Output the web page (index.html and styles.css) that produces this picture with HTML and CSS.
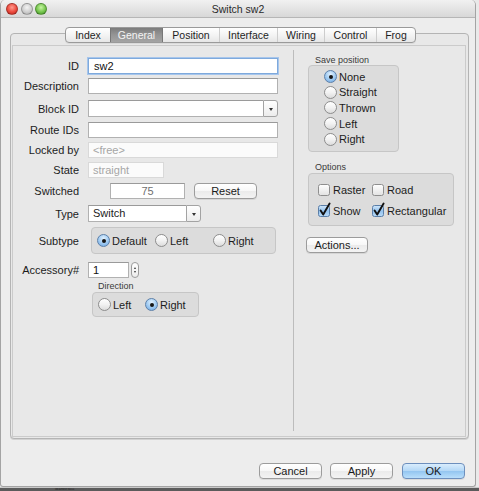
FILE: index.html
```html
<!DOCTYPE html>
<html>
<head>
<meta charset="utf-8">
<title>Switch sw2</title>
<link rel="stylesheet" href="styles.css">
</head>
<body>
<div class="window">
  <div class="titlebar">
    <div class="lights">
      <span class="light red"></span>
      <span class="light grey"></span>
      <span class="light green"></span>
    </div>
    <div class="title">Switch sw2</div>
    <div class="lights-spacer"></div>
  </div>

  <div class="tabpane">
    <div class="tabs">
      <div class="tab">Index</div>
      <div class="tab selected">General</div>
      <div class="tab">Position</div>
      <div class="tab">Interface</div>
      <div class="tab">Wiring</div>
      <div class="tab">Control</div>
      <div class="tab">Frog</div>
    </div>

    <div class="panel">
      <div class="col-left">
        <div class="row">
          <span class="lbl">ID</span>
          <div class="field focus w-full">sw2</div>
        </div>
        <div class="row mt4">
          <span class="lbl">Description</span>
          <div class="field w-full"></div>
        </div>
        <div class="row mt6">
          <span class="lbl">Block ID</span>
          <div class="combo w-full">
            <div class="combo-text"></div>
            <div class="combo-btn"><span class="tri"></span></div>
          </div>
        </div>
        <div class="row mt6">
          <span class="lbl">Route IDs</span>
          <div class="field w-full"></div>
        </div>
        <div class="row mt4">
          <span class="lbl">Locked by</span>
          <div class="field disabled w-full">&lt;free&gt;</div>
        </div>
        <div class="row mt4">
          <span class="lbl">State</span>
          <div class="field disabled w-state">straight</div>
        </div>
        <div class="row mt5">
          <span class="lbl">Switched</span>
          <div class="switched">
            <div class="field center muted w-switched">75</div>
            <div class="btn w-reset">Reset</div>
          </div>
        </div>
        <div class="row mt6">
          <span class="lbl">Type</span>
          <div class="combo w-type">
            <div class="combo-text">Switch</div>
            <div class="combo-btn"><span class="tri"></span></div>
          </div>
        </div>
        <div class="row row-group mt6">
          <span class="lbl">Subtype</span>
          <div class="group subtype">
            <div class="opt"><span class="radio on"></span>Default</div>
            <div class="opt"><span class="radio"></span>Left</div>
            <div class="opt"><span class="radio"></span>Right</div>
          </div>
        </div>
        <div class="row mt8">
          <span class="lbl">Accessory#</span>
          <div class="spin">
            <div class="field w-acc">1</div>
            <div class="stepper"><span class="up"></span><span class="down"></span></div>
          </div>
        </div>
        <div class="row-sub">
          <div class="sub-title">Direction</div>
          <div class="group direction">
            <div class="opt"><span class="radio"></span>Left</div>
            <div class="opt"><span class="radio on"></span>Right</div>
          </div>
        </div>
      </div>

      <div class="divider"></div>

      <div class="col-right">
        <div class="sub-title right-title">Save position</div>
        <div class="group savepos">
          <div class="opt vopt"><span class="radio on"></span>None</div>
          <div class="opt vopt"><span class="radio"></span>Straight</div>
          <div class="opt vopt"><span class="radio"></span>Thrown</div>
          <div class="opt vopt"><span class="radio"></span>Left</div>
          <div class="opt vopt"><span class="radio"></span>Right</div>
        </div>

        <div class="sub-title right-title options-title">Options</div>
        <div class="group options">
          <div class="opt copt">
            <svg class="check" width="13" height="14" viewBox="0 0 13 14"><rect x="0.5" y="2.5" width="11" height="11" rx="2" fill="url(#cbw)" stroke="#8e8e8e"/></svg>Raster
          </div>
          <div class="opt copt">
            <svg class="check" width="13" height="14" viewBox="0 0 13 14"><rect x="0.5" y="2.5" width="11" height="11" rx="2" fill="url(#cbw)" stroke="#8e8e8e"/></svg>Road
          </div>
          <div class="opt copt">
            <svg class="check" width="13" height="14" viewBox="0 0 13 14"><rect x="0.5" y="2.5" width="11" height="11" rx="2" fill="url(#cbb)" stroke="#5a7ea8"/><path d="M2.6 7.6 L5.2 11.6 L11.6 0.6" fill="none" stroke="#111" stroke-width="1.9" stroke-linecap="round" stroke-linejoin="round"/></svg>Show
          </div>
          <div class="opt copt">
            <svg class="check" width="13" height="14" viewBox="0 0 13 14"><rect x="0.5" y="2.5" width="11" height="11" rx="2" fill="url(#cbb)" stroke="#5a7ea8"/><path d="M2.6 7.6 L5.2 11.6 L11.6 0.6" fill="none" stroke="#111" stroke-width="1.9" stroke-linecap="round" stroke-linejoin="round"/></svg>Rectangular
          </div>
        </div>

        <div class="btn w-actions">Actions...</div>
      </div>
    </div>
  </div>

  <div class="buttons">
    <div class="btn w-dlg">Cancel</div>
    <div class="btn w-dlg">Apply</div>
    <div class="btn default w-dlg">OK</div>
  </div>
</div>
<div class="desk">localhost:8051</div>

<svg class="defs" width="0" height="0">
  <defs>
    <linearGradient id="cbw" x1="0" y1="0" x2="0" y2="1">
      <stop offset="0" stop-color="#ffffff"/>
      <stop offset="1" stop-color="#e2e2e2"/>
    </linearGradient>
    <linearGradient id="cbb" x1="0" y1="0" x2="0" y2="1">
      <stop offset="0" stop-color="#d2e7fa"/>
      <stop offset="0.5" stop-color="#93c2ee"/>
      <stop offset="1" stop-color="#b9dbf8"/>
    </linearGradient>
  </defs>
</svg>
</body>
</html>
```

FILE: styles.css
```css
* { box-sizing: border-box; }

html, body {
  margin: 0;
  padding: 0;
}

body {
  width: 479px;
  height: 491px;
  overflow: hidden;
  background: #e9e9e9;
  font-family: "Liberation Sans", Arial, sans-serif;
  font-size: 11px;
  color: #1c1c1c;
}

.window {
  width: 476px;
  height: 487px;
  background: #ededed;
  border: 1px solid #a4a4a4;
  border-top: none;
  border-radius: 5px 5px 3px 3px;
  display: flex;
  flex-direction: column;
}

/* title bar */
.titlebar {
  height: 18px;
  flex: none;
  display: flex;
  align-items: center;
  background: linear-gradient(#f1f1f1, #d8d8d8);
  border-bottom: 1px solid #b6b6b6;
  border-radius: 5px 5px 0 0;
}

.lights {
  width: 46px;
  padding-left: 5px;
  display: flex;
  gap: 2.5px;
  margin-top: 1px;
}

.lights-spacer { width: 46px; }

.light {
  width: 12px;
  height: 12px;
  border-radius: 50%;
  border: 1px solid rgba(0, 0, 0, 0.25);
}

.light.red { background: radial-gradient(circle at 50% 35%, #ff9c8f 0, #ec4a3e 55%, #b8261e 100%); }
.light.grey { background: radial-gradient(circle at 50% 35%, #f4f4f4 0, #cfcfcf 55%, #a9a9a9 100%); }
.light.green { background: radial-gradient(circle at 50% 35%, #c8f5a4 0, #76c64e 55%, #3f8f25 100%); }

.title {
  flex: 1;
  text-align: center;
  font-size: 10.5px;
  color: #2a2a2a;
  margin-top: 1px;
}

/* tabbed pane */
.tabpane {
  position: relative;
  margin: 15px 0 0 9px;
  width: 459px;
  height: 406px;
  flex: none;
  border: 1px solid #b4b4b4;
  border-radius: 4px;
  background: #e8e8e8;
  padding: 11px 2px 1px 1px;
  box-shadow: 0 1px 0 #d2d2d2;
}

.tabs {
  position: absolute;
  top: -7px;
  left: 54px;
  display: grid;
  grid-template-columns: 44px 53px 56px 58px 47px 52px 39px;
  height: 16px;
  border: 1px solid #9a9a9a;
  border-radius: 4px;
  background: linear-gradient(#ffffff, #f4f4f4 50%, #e6e6e6);
  overflow: hidden;
  box-shadow: 0 1px 0 rgba(0, 0, 0, 0.06);
}

.tab {
  display: flex;
  align-items: center;
  justify-content: center;
  font-size: 10.5px;
  color: #1e1e1e;
  border-left: 1px solid #cdcdcd;
  line-height: 1;
}

.tab:first-child { border-left: none; }

.tab.selected {
  background: linear-gradient(#7c7c7c, #959595 50%, #a4a4a4);
  color: #f4f4f4;
  border-left: 1px solid #777;
  border-right: 1px solid #777;
}

.tab.selected + .tab { border-left: none; }

.panel {
  height: 100%;
  border: 1px solid #cbcbcb;
  background: #e8e8e8;
  display: flex;
}

/* left column */
.col-left {
  width: 280px;
  flex: none;
  padding-top: 12px;
  display: flex;
  flex-direction: column;
}

.row {
  display: grid;
  grid-template-columns: 66px auto;
  column-gap: 9px;
  align-items: center;
  height: 16px;
}

.row-group { height: 27px; }

.mt4 { margin-top: 4px; }
.mt5 { margin-top: 5px; }
.mt6 { margin-top: 6px; }
.mt8 { margin-top: 8px; }

.lbl {
  text-align: right;
  white-space: nowrap;
  color: #1c1c1c;
}

.field {
  height: 16px;
  background: #ffffff;
  border: 1px solid #b1b1b1;
  border-top-color: #9a9a9a;
  padding: 0 4px;
  line-height: 14px;
  color: #111;
  white-space: nowrap;
  overflow: hidden;
}

.field.focus {
  border-color: #7ea9dc;
  box-shadow: 0 0 0 1px #a7c6ec;
  padding-left: 5px;
}

.field.disabled {
  border-color: #d9d9d9;
  background: #fbfbfb;
  color: #a6a6a6;
}

.field.center { text-align: center; }
.field.muted { color: #6f6f6f; }

.w-full { width: 190px; }
.w-state { width: 76px; }
.w-switched { width: 75px; }
.w-type { width: 113px; }
.w-acc { width: 41px; }

.switched {
  display: flex;
  align-items: center;
  gap: 9px;
  padding-left: 22px;
}

.combo {
  height: 17px;
  display: flex;
  align-items: stretch;
}

.combo-text {
  flex: 1;
  background: #fff;
  border: 1px solid #b1b1b1;
  border-top-color: #9a9a9a;
  border-right: none;
  padding: 0 4px;
  line-height: 15px;
}

.combo-btn {
  width: 15px;
  border: 1px solid #a3a3a3;
  border-radius: 0 3px 3px 0;
  background: linear-gradient(#ffffff, #ececec);
  display: flex;
  align-items: center;
  justify-content: center;
}

.tri {
  width: 0;
  height: 0;
  border-left: 2.5px solid transparent;
  border-right: 2.5px solid transparent;
  border-top: 3px solid #333;
  margin-top: 1px;
}

/* buttons */
.btn {
  height: 16px;
  border: 1px solid #9c9c9c;
  border-radius: 4px;
  background: linear-gradient(#ffffff, #f7f7f7 50%, #ebebeb 51%, #f3f3f3);
  display: flex;
  align-items: center;
  justify-content: center;
  color: #1a1a1a;
  box-shadow: 0 1px 0 rgba(0, 0, 0, 0.08);
}

.btn.default {
  border-color: #6d8fbd;
  background: linear-gradient(#d9edfd, #b3d7f6 50%, #93c5f0 51%, #b9defb);
}

.w-reset { width: 63px; }
.w-actions { width: 62px; margin: 11px 0 0 12px; }
.w-dlg { width: 63px; }

/* groups */
.group {
  background: #dcdcdc;
  border: 1px solid #c6c6c6;
  border-radius: 4px;
}

.opt {
  display: flex;
  align-items: center;
  gap: 2px;
  white-space: nowrap;
}

.radio {
  width: 13px;
  height: 13px;
  flex: none;
  border-radius: 50%;
  border: 1px solid #8d8d8d;
  background: linear-gradient(#ffffff, #f2f2f2 50%, #dcdcdc);
  display: flex;
  align-items: center;
  justify-content: center;
}

.radio.on {
  border-color: #5d80a9;
  background: radial-gradient(circle at 50% 30%, #e3f1fd 0, #a8d0f4 45%, #6ea7e2 100%);
}

.radio.on::after {
  content: "";
  width: 4px;
  height: 4px;
  border-radius: 50%;
  background: #161616;
}

.subtype {
  width: 185px;
  height: 27px;
  margin-left: 3px;
  display: grid;
  grid-template-columns: 58px 58px auto;
  align-items: center;
  padding-left: 5px;
}

.spin {
  display: flex;
  align-items: center;
  gap: 2px;
}

.stepper {
  width: 8px;
  height: 16px;
  border: 1px solid #9c9c9c;
  border-radius: 4px;
  background: linear-gradient(#ffffff, #ececec);
  display: flex;
  flex-direction: column;
  align-items: center;
  justify-content: center;
  gap: 2px;
}

.stepper .up,
.stepper .down {
  width: 0;
  height: 0;
  border-left: 1.5px solid transparent;
  border-right: 1.5px solid transparent;
}

.stepper .up { border-bottom: 2px solid #333; }
.stepper .down { border-top: 2px solid #333; }

.row-sub {
  margin-top: 3px;
  padding-left: 75px;
}

.sub-title {
  font-size: 9px;
  line-height: 11px;
  color: #3a3a3a;
}

.row-sub .sub-title { padding-left: 10px; }

.direction {
  width: 107px;
  height: 25px;
  margin-left: 4px;
  display: grid;
  grid-template-columns: 47px auto;
  align-items: center;
  padding-left: 5px;
}

.divider {
  width: 1px;
  flex: none;
  background: #bcbcbc;
  margin: 4px 0 5px;
}

/* right column */
.col-right {
  flex: 1;
  padding-top: 9px;
  display: flex;
  flex-direction: column;
  align-items: flex-start;
}

.right-title {
  margin-left: 21px;
  height: 10px;
  line-height: 10px;
}

.savepos {
  margin: 0 0 0 14px;
  width: 91px;
  height: 87px;
  padding: 3px 0 0 15px;
}

.vopt { height: 15.6px; }

.options-title { margin-top: 10px; }

.options {
  margin: 1px 0 0 14px;
  width: 146px;
  height: 53px;
  padding: 5px 0 0 9px;
  display: grid;
  grid-template-columns: 54px auto;
  grid-auto-rows: 21px;
}

.copt { gap: 2px; align-items: center; }

.check {
  flex: none;
  margin-top: -2px;
  overflow: visible;
}

/* bottom buttons */
.buttons {
  display: flex;
  justify-content: flex-end;
  gap: 8px;
  padding-right: 10px;
  margin-top: 24px;
}

.buttons .btn + .btn.default { margin-left: 1px; }

.desk {
  height: 4px;
  background: #5b5b5b;
  border-top: 1px solid #c9c9c9;
  padding-left: 55px;
  font-size: 3px;
  line-height: 3px;
  color: #1d1d1d;
  overflow: hidden;
}

.defs { position: absolute; }
```
